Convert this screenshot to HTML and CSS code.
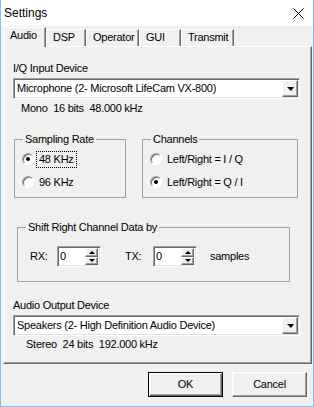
FILE: index.html
```html
<!DOCTYPE html>
<html>
<head>
  <meta charset="UTF-8">
  <meta name="viewport" content="width=device-width, initial-scale=1">
  <title>Settings</title>
  <link rel="stylesheet" href="styles.css">
</head>
<body>
  <div class="window">
    <div class="titlebar">
      <span class="title">Settings</span>
      <span class="close">
        <svg width="11" height="11" viewBox="0 0 11 11"><path d="M0.5 0.5L10.5 10.5M10.5 0.5L0.5 10.5" stroke="#000" stroke-width="1" fill="none"/></svg>
      </span>
    </div>

    <div class="tabs">
      <div class="tab tab-audio active">Audio</div>
      <div class="tab tab-dsp">DSP</div>
      <div class="tab tab-operator">Operator</div>
      <div class="tab tab-gui">GUI</div>
      <div class="tab tab-transmit">Transmit</div>
    </div>

    <div class="panel">
      <div class="label">I/Q Input Device</div>
      <div class="combo sunken">
        <span class="combo-text">Microphone (2- Microsoft LifeCam VX-800)</span>
        <span class="combo-btn raised"><span class="arrow-down"></span></span>
      </div>
      <div class="info info-in">Mono  16 bits  48.000 kHz</div>

      <div class="group-row">
        <fieldset class="group group-rate">
          <legend>Sampling Rate</legend>
          <label class="radio"><span class="dot checked"></span><span class="radio-text focus">48 KHz</span></label>
          <label class="radio"><span class="dot"></span><span class="radio-text">96 KHz</span></label>
        </fieldset>
        <fieldset class="group group-channels">
          <legend>Channels</legend>
          <label class="radio"><span class="dot"></span><span class="radio-text">Left/Right = I / Q</span></label>
          <label class="radio"><span class="dot checked"></span><span class="radio-text">Left/Right = Q / I</span></label>
        </fieldset>
      </div>

      <fieldset class="group group-shift">
        <legend>Shift Right Channel Data by</legend>
        <div class="spin-row">
          <span class="spin-label">RX:</span>
          <div class="spin sunken">
            <span class="spin-value">0</span>
            <span class="spin-btns">
              <span class="spin-up raised"></span>
              <span class="spin-down raised"></span>
            </span>
          </div>
          <span class="spin-label tx">TX:</span>
          <div class="spin sunken">
            <span class="spin-value">0</span>
            <span class="spin-btns">
              <span class="spin-up raised"></span>
              <span class="spin-down raised"></span>
            </span>
          </div>
          <span class="samples">samples</span>
        </div>
      </fieldset>

      <div class="label label-out">Audio Output Device</div>
      <div class="combo sunken">
        <span class="combo-text">Speakers (2- High Definition Audio Device)</span>
        <span class="combo-btn raised"><span class="arrow-down"></span></span>
      </div>
      <div class="info info-out">Stereo  24 bits  192.000 kHz</div>
    </div>

    <div class="footer">
      <button class="btn btn-default">OK</button>
      <button class="btn">Cancel</button>
    </div>
  </div>
</body>
</html>
```

FILE: styles.css
```css
body {
  margin: 0;
  font-family: "Liberation Sans", Arial, sans-serif;
  font-size: 11px;
  letter-spacing: -0.25px;
  line-height: 13px;
  color: #000;
  background: #f0f0f0;
}

.window {
  width: 314px;
  height: 407px;
  box-sizing: border-box;
  border: 1px solid #85bff0;
  border-top: none;
  background: #f0f0f0;
  display: flex;
  flex-direction: column;
}

/* title bar */
.titlebar {
  height: 26px;
  flex: none;
  background: #fff;
  display: flex;
  align-items: center;
  justify-content: space-between;
  padding: 0 9px 0 3px;
}
.title {
  font-size: 12px;
  letter-spacing: 0;
}
.close svg {
  display: block;
}

/* 3d borders */
.raised {
  border: 1px solid;
  border-color: #fff #696969 #696969 #fff;
  box-shadow: inset -1px -1px 0 #a0a0a0;
  background: #f0f0f0;
  box-sizing: border-box;
}
.sunken {
  border: 1px solid;
  border-color: #a0a0a0 #fff #fff #a0a0a0;
  box-shadow: inset 1px 1px 0 #696969, inset -1px -1px 0 #e3e3e3;
  background: #fff;
  box-sizing: border-box;
}

/* tabs */
.tabs {
  height: 20px;
  flex: none;
  display: flex;
  align-items: flex-end;
  padding-left: 2px;
  position: relative;
  z-index: 1;
}
.tab {
  height: 17px;
  box-sizing: border-box;
  padding: 1px 0 0 6px;
  border: 1px solid;
  border-bottom: none;
  border-color: #fff #696969 transparent #fff;
  box-shadow: inset -1px 0 0 #a0a0a0;
  background: #f0f0f0;
}
.tab.active {
  height: 20px;
  margin-bottom: -1px;
}
.tab-audio { width: 43px; }
.tab-dsp { width: 40px; }
.tab-operator { width: 53px; }
.tab-gui { width: 42px; }
.tab-transmit { width: 53px; }

/* panel */
.panel {
  height: 318px;
  flex: none;
  box-sizing: border-box;
  margin: 0 1px 0 2px;
  border: 1px solid;
  border-color: #fff #696969 #696969 #fff;
  box-shadow: inset -1px -1px 0 #a0a0a0;
  padding: 15px 0 0 9px;
}

.combo {
  width: 287px;
  height: 21px;
  margin-top: 3px;
  padding: 1px;
  display: flex;
  align-items: center;
}
.combo-text {
  flex: 1;
  padding-left: 2px;
  white-space: nowrap;
}
.combo-btn {
  width: 16px;
  height: 17px;
  display: flex;
  align-items: center;
  justify-content: center;
}
.arrow-down {
  width: 0;
  height: 0;
  border-left: 4px solid transparent;
  border-right: 3px solid transparent;
  border-top: 4px solid #000;
}

.info {
  white-space: pre;
  margin-top: 3px;
}
.info-in { margin-left: 8px; }
.info-out { margin-left: 13px; margin-top: 2px; }

/* group boxes */
.group-row {
  display: flex;
  margin-top: 18px;
  margin-left: 1px;
}
.group {
  margin: 0;
  min-width: 0;
  box-sizing: border-box;
  border: 1px solid #a0a0a0;
  padding: 5px 7px 7px;
}
.group legend {
  padding: 0 2px;
  margin-left: 1px;
}
.group-rate { width: 112px; }
.group-channels { width: 156px; margin-left: 16px; }

.radio {
  display: flex;
  align-items: center;
  height: 16px;
}
.radio + .radio {
  margin-top: 7px;
}
.dot {
  width: 12px;
  height: 12px;
  flex: none;
  box-sizing: border-box;
  border-radius: 50%;
  border: 1px solid;
  border-color: #a0a0a0 #fff #fff #a0a0a0;
  box-shadow: inset 1px 1px 0 #696969;
  background: #fff;
  display: flex;
  align-items: center;
  justify-content: center;
}
.dot.checked::after {
  content: "";
  width: 4px;
  height: 4px;
  border-radius: 50%;
  background: #000;
}
.radio-text {
  margin-left: 3px;
  padding: 1px 2px;
  white-space: nowrap;
}
.focus {
  outline: 1px dotted #000;
}

.group-shift {
  width: 273px;
  margin: 23px 0 0 4px;
  padding: 12px 12px 14px;
}
.group-shift legend {
  margin-left: -4px;
}
.spin-row {
  display: flex;
  align-items: center;
  height: 21px;
}
.spin-label { width: 27px; }
.spin-label.tx { width: 28px; margin-left: 24px; }
.spin {
  width: 44px;
  height: 21px;
  padding: 1px;
  display: flex;
}
.spin-value {
  flex: 1;
  padding-left: 1px;
  line-height: 17px;
}
.spin-btns {
  width: 13px;
  margin-right: 1px;
  display: flex;
  flex-direction: column;
}
.spin-up, .spin-down {
  flex: 1;
  display: flex;
  align-items: center;
  justify-content: center;
}
.spin-up::after {
  content: "";
  border-left: 3px solid transparent;
  border-right: 3px solid transparent;
  border-bottom: 3px solid #000;
}
.spin-down::after {
  content: "";
  border-left: 3px solid transparent;
  border-right: 3px solid transparent;
  border-top: 3px solid #000;
}
.samples { margin-left: 13px; }

.label-out { margin-top: 17px; }

/* buttons */
.footer {
  display: flex;
  justify-content: flex-end;
  gap: 9px;
  padding: 8px 6px 0 0;
}
.btn {
  width: 75px;
  height: 25px;
  box-sizing: border-box;
  padding: 0;
  font: inherit;
  letter-spacing: inherit;
  color: #000;
  background: #f0f0f0;
  border: 1px solid;
  border-color: #fff #696969 #696969 #fff;
  box-shadow: inset -1px -1px 0 #a0a0a0, inset 1px 1px 0 #f8f8f8;
}
.btn-default {
  border-color: #000;
  box-shadow: inset 1px 1px 0 #fff, inset -1px -1px 0 #696969, inset -2px -2px 0 #a0a0a0;
}
```
